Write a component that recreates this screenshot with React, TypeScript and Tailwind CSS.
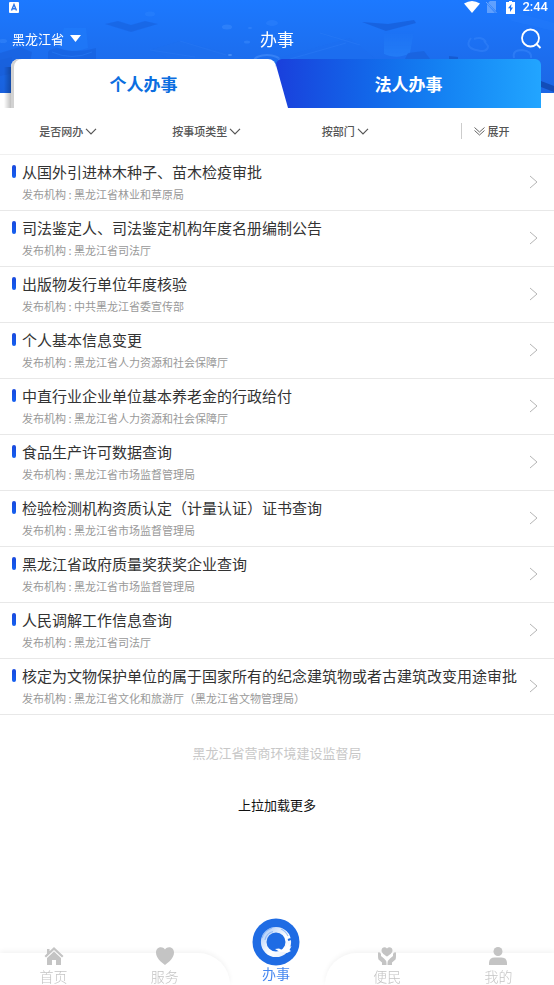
import type { ReactNode } from "react";

const ITEMS = [
  { title: "从国外引进林木种子、苗木检疫审批", org: "黑龙江省林业和草原局" },
  { title: "司法鉴定人、司法鉴定机构年度名册编制公告", org: "黑龙江省司法厅" },
  { title: "出版物发行单位年度核验", org: "中共黑龙江省委宣传部" },
  { title: "个人基本信息变更", org: "黑龙江省人力资源和社会保障厅" },
  { title: "中直行业企业单位基本养老金的行政给付", org: "黑龙江省人力资源和社会保障厅" },
  { title: "食品生产许可数据查询", org: "黑龙江省市场监督管理局" },
  { title: "检验检测机构资质认定（计量认证）证书查询", org: "黑龙江省市场监督管理局" },
  { title: "黑龙江省政府质量奖获奖企业查询", org: "黑龙江省市场监督管理局" },
  { title: "人民调解工作信息查询", org: "黑龙江省司法厅" },
  { title: "核定为文物保护单位的属于国家所有的纪念建筑物或者古建筑改变用途审批", org: "黑龙江省文化和旅游厅（黑龙江省文物管理局）" },
];

const FILTERS = ["是否网办", "按事项类型", "按部门"];

function HeaderArt() {
  return (
    <svg className="absolute inset-x-0 top-0 h-[93px] w-full" viewBox="0 0 554 93" preserveAspectRatio="none" aria-hidden="true">
      <defs>
        <linearGradient id="sky" x1="0" y1="0" x2="0" y2="1">
          <stop offset="0" stopColor="#1c79ff" />
          <stop offset="1" stopColor="#1c66e4" />
        </linearGradient>
        <linearGradient id="glow" x1="0" y1="0" x2="0" y2="1">
          <stop offset="0" stopColor="#2c8cff" stopOpacity="0" />
          <stop offset="1" stopColor="#2c8cff" />
        </linearGradient>
      </defs>
      <rect width="554" height="93" fill="url(#sky)" />
      <g opacity=".6">
        <path d="M0 53L20 47L32 52L30 62L10 74L0 76Z" fill="#1552c8" opacity=".5" />
        <path d="M0 60L12 57V93H0Z" fill="#1450c4" opacity=".3" />
        <ellipse cx="3" cy="41" rx="4" ry="2" fill="#4593ff" opacity=".6" />
        <path d="M48 52Q50 48 60 48Q75 54 96 48V59H48Z" fill="#1658d0" opacity=".6" />
        <path d="M52 52Q72 61 92 52" fill="none" stroke="#2a7cf4" opacity=".7" />
        <path d="M64 28H86L88 48Q72 54 58 48Z" fill="#2484ff" opacity=".6" />
        <path d="M105 24L118 21L131 25L145 21L158 24L131 32Z" fill="#1555cd" opacity=".6" />
        <path d="M150 50L180 41L250 59H170Z" fill="#2270ea" opacity=".4" />
        <path d="M150 50L195 57M180 41L226 55" stroke="#3784f6" strokeWidth="1" opacity=".4" />
        <ellipse cx="227" cy="27" rx="5" ry="2.5" fill="#4593ff" opacity=".7" />
        <ellipse cx="150" cy="14" rx="5" ry="2.5" fill="#3388ff" opacity=".6" />
        <ellipse cx="247" cy="42" rx="3" ry="1.5" fill="#4593ff" opacity=".7" />
        <ellipse cx="250" cy="28" rx="2" ry="1" fill="#4593ff" opacity=".7" />
        <ellipse cx="230" cy="55" rx="2" ry="1" fill="#7ab4ff" opacity=".8" />
        <ellipse cx="272" cy="23" rx="6" ry="3" fill="#3b8bff" opacity=".5" />
        <ellipse cx="267" cy="61" rx="13" ry="6" fill="none" stroke="#5a9dff" strokeWidth="2" opacity=".7" />
        <path d="M276 59L350 38L375 59Z" fill="#1f6df0" opacity=".5" />
        <path d="M290 59L346 43M320 33L360 45" stroke="#3583f8" strokeWidth="1" opacity=".5" />
        <path d="M362 22L388 24L414 20L416 23L386 31Z" fill="#1452c8" opacity=".8" />
        <path d="M384 31H414L410 53Q397 60 384 54Z" fill="url(#glow)" opacity=".8" />
        <path d="M408 53L424 51L430 59H405Z" fill="#134fc2" opacity=".5" />
        <path d="M500 8L554 23V31L512 21Z" fill="#3389ff" opacity=".3" />
        <path d="M471 38Q464 47 476 50Q488 53 488 46L484 41M474 39Q482 36 486 42" fill="none" stroke="#4a94ff" strokeWidth="2" opacity=".5" />
        <path d="M514 58Q512 50 522 50Q532 51 531 58" fill="none" stroke="#4a94ff" strokeWidth="2" opacity=".6" />
        <path d="M449 56L458 57V59H449Z" fill="#0f45ad" opacity=".7" />
        <path d="M541 81L554 86V92L541 87Z" fill="#0c3c99" />
      </g>
    </svg>
  );
}

function StatusBar() {
  return (
    <div className="flex h-[14px] items-center pr-[6px] pl-[9px]">
      <svg width="10" height="11" viewBox="0 0 10 11">
        <rect width="10" height="11" rx="1" fill="#fff" />
        <path d="M2.5 8.5L5 2.5L7.5 8.5M3.5 6.8H6.5" fill="none" stroke="#2b77e8" strokeWidth="1.4" />
      </svg>
      <svg className="ml-auto" width="16" height="12" viewBox="0 0 16 12">
        <path d="M0 2.500Q8 -2.500 16 2.500L8 12Z" fill="#fff" />
      </svg>
      <svg className="ml-[6px]" width="11" height="12" viewBox="0 0 11 12">
        <path d="M4 0H10V10L2 2ZM1 3L9 12H1Z" fill="#fff" opacity=".3" />
        <path d="M0 1L10.500 12" stroke="#fff" strokeWidth="1" opacity=".35" />
      </svg>
      <svg className="ml-[9px]" width="9" height="13" viewBox="0 0 9 13">
        <path d="M3 0H6V1H9V13H0V1H3Z" fill="#fff" />
        <path d="M5.500 3L2 7.200H4V11L7 6.400H5Z" fill="#1c74f5" />
      </svg>
      <span className="ml-[7px] font-[Roboto] text-[13px] leading-[14px] font-medium">2:44</span>
    </div>
  );
}

function Chevron() {
  return (
    <svg width="12" height="7" viewBox="0 0 12 7" fill="none" stroke="#555" strokeWidth="1.2">
      <path d="M1 .8L6 5.800L11 .8" />
    </svg>
  );
}

function NavItem({ label, children }: { label: string; children: ReactNode }) {
  return (
    <a href="#" className="flex flex-col items-center justify-end gap-[2px] pb-px text-[#c4c4c4]">
      <svg width="20" height="20" viewBox="0 0 20 20" fill="currentColor">{children}</svg>
      <span className="text-[14px] leading-4 font-light">{label}</span>
    </a>
  );
}

function BottomNav() {
  return (
    <nav className="fixed inset-x-0 bottom-0 h-[68px]">
      <div className="absolute inset-x-0 bottom-0 flex h-8 justify-between gap-[95px]">
        <div className="flex-1 rounded-tr-[34px] bg-white shadow-[0_-2px_5px_rgba(0,0,0,0.05)]" />
        <div className="flex-1 rounded-tl-[34px] bg-white shadow-[0_-2px_5px_rgba(0,0,0,0.05)]" />
      </div>
      <div className="relative -ml-[2px] grid h-full grid-cols-5">
        <NavItem label="首页">
          <path d="M10 1L19.500 10L18 11.500L10 4L2 11.500L.5 10L3 7.600V3H5.500V5.200Z" />
          <path d="M10 5.500L17 12V19H12V14H8V19H3V12Z" />
        </NavItem>
        <NavItem label="服务">
          <path d="M10 19C6 16 1 12 1 6.500C1 1 7.500-.5 10 3.500C12.500-.5 19 1 19 6.500C19 12 14 16 10 19Z" />
        </NavItem>
        <a href="#" aria-current="page" className="flex flex-col items-center justify-end pb-[5px] text-[#4788f0]">
          <svg width="48" height="48" viewBox="0 0 48 48">
            <defs>
              <linearGradient id="swirl" x1="0" y1="0" x2="1" y2="1">
                <stop offset="0" stopColor="#a9caf8" />
                <stop offset=".3" stopColor="#dbe8fc" />
                <stop offset=".6" stopColor="#fff" />
                <stop offset="1" stopColor="#e4eefd" />
              </linearGradient>
            </defs>
            <circle cx="24" cy="24" r="23.500" fill="#1f6ce4" />
            <circle cx="24" cy="24" r="12.300" fill="none" stroke="url(#swirl)" strokeWidth="5.600" />
            <path d="M10 20A14.500 14.500 0 0 1 20 10M13 22A11 11 0 0 1 21 13.500M29 11A14 14 0 0 1 36 18" fill="none" stroke="#78aaf3" strokeWidth="1.200" opacity=".7" />
            <path d="M23 31L27 30.500L30 32L33 28L33.500 30L35 26L36.500 24L36 28L38 24.500L37.500 29L39.500 28L37.500 32L39 33L35 35L32 34L28 34Z" fill="#fff" />
            <path d="M33 38L39 35M36 22L39 21" stroke="#1f6ce4" strokeWidth="2" />
          </svg>
          <span className="text-[14px] leading-[14px]">办事</span>
        </a>
        <NavItem label="便民">
          <path d="M10 10.500C7.500 9 4.500 7 4.500 4.500C4.500 1 8.500 .5 10 2.500C11.500 .5 15.500 1 15.500 4.500C15.500 7 12.500 9 10 10.500Z" />
          <path d="M1 6.500Q3 5.500 4 8V10L7 12.500Q9.500 14.500 9.500 17V19H5V16.500L1.500 13.500Q1 12 1 10Z" />
          <path d="M19 6.500Q17 5.500 16 8V10L13 12.500Q10.500 14.500 10.500 17V19H15V16.500L18.500 13.500Q19 12 19 10Z" />
        </NavItem>
        <NavItem label="我的">
          <circle cx="10" cy="5.500" r="4.500" />
          <path d="M1 19V16.500Q1.500 11.500 6.500 11.500H13.500Q18.500 11.500 19 16.500V19Z" />
        </NavItem>
      </div>
    </nav>
  );
}

export default function App() {
  return (
    <div className="min-h-screen bg-white pb-[68px] font-['Noto_Sans_CJK_SC',sans-serif]">
      <header className="relative text-white">
        <HeaderArt />
        <div className="relative">
          <StatusBar />
          <div className="grid h-[45px] grid-cols-3 items-center px-3 pt-1">
            <button className="flex items-center gap-[6px] text-[13px] leading-5">
              黑龙江省
              <svg width="11" height="7" viewBox="0 0 11 7" fill="#fff"><path d="M0 0H11L5.500 7Z" /></svg>
            </button>
            <h1 className="text-center text-[17px] leading-6">办事</h1>
            <button aria-label="搜索" className="justify-self-end">
              <svg width="22" height="22" viewBox="0 0 22 22" fill="none" stroke="#fff" strokeWidth="1.800">
                <circle cx="10.500" cy="10" r="8.500" />
                <path d="M16.500 16L20.500 20" />
              </svg>
            </button>
          </div>
          <div role="tablist" className="flex h-[49px] pr-[13px]">
            <div className="w-[11px] pt-2 pl-1">
              <div className="h-full bg-linear-to-r from-black/0 to-black/25" />
            </div>
            <button role="tab" aria-selected="true" className="flex-1 rounded-t-[8px] bg-white text-[17px] font-bold text-[#0b6ee0] shadow-[inset_3px_0_0_#d2d2d2]">
              个人办事
            </button>
            <button role="tab" aria-selected="false" className="relative flex-1 rounded-t-[6px] bg-linear-to-r from-[#1a3fdc] to-[#22a5ff] text-[17px] font-bold">
              <svg className="absolute bottom-0 left-0" width="12" height="49" viewBox="0 0 12 49" fill="#fff"><path d="M0 6L12 49H0Z" /></svg>
              法人办事
            </button>
          </div>
        </div>
      </header>

      <div className="grid h-[47px] grid-cols-4 border-b border-[#f0f0f0] text-[11px] font-medium text-[#555]">
        {FILTERS.map((name) => (
          <button key={name} className="flex items-center justify-center gap-[2px] pr-[2px]">
            {name}
            <Chevron />
          </button>
        ))}
        <div className="flex items-center pl-[45px]">
          <button className="flex h-4 items-center gap-[3px] border-l border-[#ccc] pl-3">
            <svg width="11" height="9" viewBox="0 0 11 9" fill="none" stroke="#666" strokeWidth="1">
              <path d="M.5 .5L5.500 5L10.500 .5M.5 3.500L5.500 8L10.500 3.500" />
            </svg>
            展开
          </button>
        </div>
      </div>

      <ul>
        {ITEMS.map((item) => (
          <li key={item.title} className="border-b border-[#e8e8e8]">
            <a href="#" className="flex h-[55px] items-center pr-4 pb-[2px] pl-3">
              <span className="mb-[20px] h-[13px] w-[4px] rounded-[2px] bg-linear-to-b from-[#1a49dd] to-[#1560f0]" />
              <span className="ml-[6px] flex flex-1 flex-col gap-[2px] pb-[2px] whitespace-nowrap">
                <span className="text-[15px] leading-6 text-[#333]">{item.title}</span>
                <span className="text-[11px] leading-4 text-[#999]">发布机构 : {item.org}</span>
              </span>
              <svg width="9" height="14" viewBox="0 0 9 14" fill="none" stroke="#b5b5b5" strokeWidth="1">
                <path d="M1 1L8 7L1 13" />
              </svg>
            </a>
          </li>
        ))}
      </ul>

      <p className="pt-7 text-center text-[13px] leading-5 text-[#c8c8c8]">黑龙江省营商环境建设监督局</p>
      <p className="pt-8 text-center text-[13px] leading-5 text-[#111]">上拉加载更多</p>

      <BottomNav />
    </div>
  );
}
